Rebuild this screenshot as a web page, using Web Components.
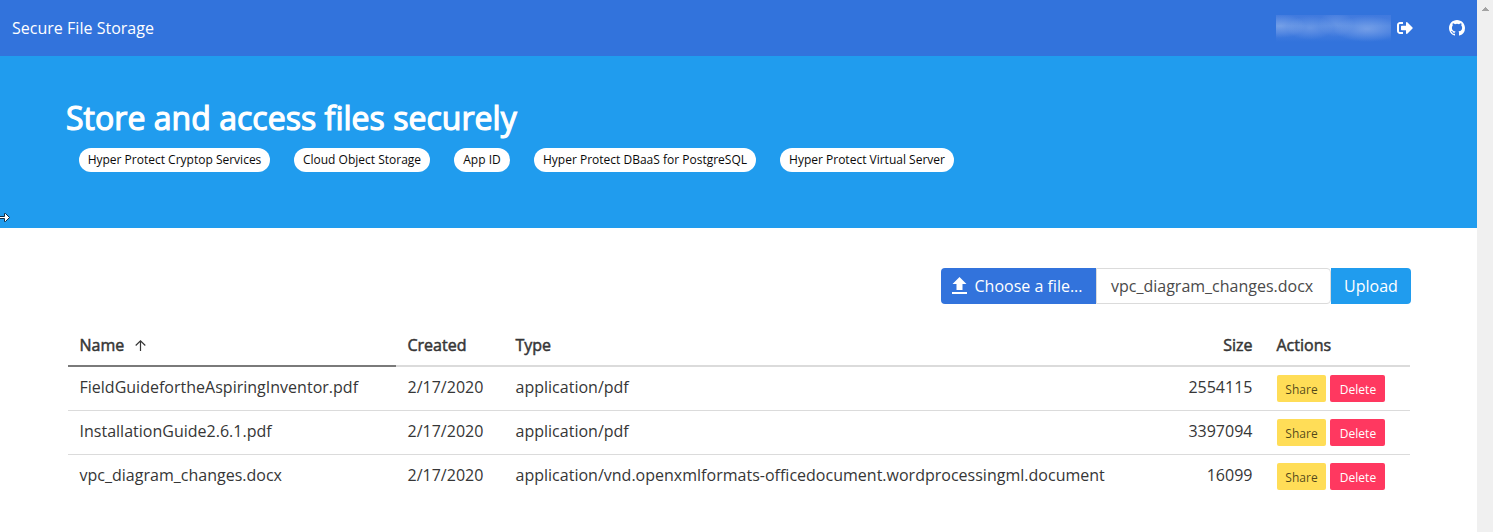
<!DOCTYPE html>
<html lang="en">
<head>
<meta charset="utf-8">
<title>Secure File Storage</title>
<style>
html,body{margin:0;height:100%;overflow:hidden;background:#fff}
body{font-family:"Open Sans","Noto Sans",sans-serif;font-size:16px;line-height:24px;color:#363636}
</style>
</head>
<body>
<storage-app></storage-app>
<script>
function define(name, html, setup) {
  customElements.define(name, class extends HTMLElement {
    constructor() {
      super();
      const t = document.createElement('template');
      t.innerHTML = html;
      this.attachShadow({mode: 'open'}).append(t.content.cloneNode(true));
    }
    connectedCallback() { if (setup) setup(this, this.shadowRoot); }
  });
}

define('top-bar', `
<style>
:host{display:flex;align-items:center;height:56px;background:#3273dc;color:#fff;padding:0 12px;box-sizing:border-box}
.brand{flex:1;letter-spacing:.02px}
.user{width:115px;height:27px;margin-right:6px;background:
radial-gradient(ellipse 26px 12px at 4px 11px,rgba(255,255,255,.24),transparent),
radial-gradient(ellipse 24px 12px at 34px 13px,rgba(255,255,255,.17),transparent),
radial-gradient(ellipse 18px 13px at 60px 9px,rgba(255,255,255,.15),transparent),
radial-gradient(ellipse 34px 13px at 91px 14px,rgba(255,255,255,.24),transparent),
linear-gradient(#4079de,#4a82e0 40%,#437cdf 65%,#3273dc)}
svg{display:block;fill:#fff}
.out{width:16px;height:16px;margin-right:36px}
.git{width:16px;height:16px}
</style>
<span class="brand">Secure File Storage</span>
<span class="user"></span>
<svg class="out" viewBox="0 0 512 512"><path d="M497 273L329 441c-15 15-41 4.500-41-17v-96H152c-13.300 0-24-10.700-24-24v-96c0-13.300 10.700-24 24-24h136V88c0-21.400 25.900-32 41-17l168 168c9.300 9.400 9.300 24.600 0 34zM192 436v-40c0-6.600-5.400-12-12-12H96c-17.700 0-32-14.300-32-32V160c0-17.700 14.300-32 32-32h84c6.600 0 12-5.400 12-12V76c0-6.600-5.400-12-12-12H96c-53 0-96 43-96 96v192c0 53 43 96 96 96h84c6.600 0 12-5.400 12-12z"/></svg>
<svg class="git" viewBox="0 0 16 16"><path d="M8 0C3.580 0 0 3.580 0 8c0 3.540 2.290 6.530 5.470 7.590.4.070.55-.17.55-.38 0-.19-.01-.82-.01-1.490-2.010.37-2.530-.49-2.690-.94-.09-.23-.48-.94-.82-1.130-.28-.15-.68-.52-.01-.53.63-.01 1.080.58 1.230.82.72 1.210 1.870.87 2.330.66.07-.52.28-.87.51-1.070-1.780-.2-3.640-.89-3.640-3.950 0-.87.31-1.590.82-2.150-.08-.2-.36-1.020.08-2.120 0 0 .67-.21 2.200.82a7.420 7.420 0 0 1 4 0c1.530-1.040 2.200-.82 2.200-.82.44 1.100.16 1.920.08 2.120.51.56.82 1.270.82 2.150 0 3.070-1.870 3.750-3.650 3.950.29.25.54.73.54 1.480 0 1.070-.01 1.930-.01 2.200 0 .21.15.46.55.38A8.010 8.010 0 0 0 16 8c0-4.420-3.580-8-8-8z"/></svg>`);

define('service-tag', `
<style>:host{display:flex;align-items:center;height:24px;border-radius:12px;background:#fff;color:#0a0a0a;font-size:12px;padding:0 9px;box-sizing:border-box;justify-content:center;white-space:nowrap}</style><slot></slot>`);

define('hero-banner', `
<style>
:host{display:block;height:172px;background:#209cee;box-sizing:border-box;padding:42px 66px 0;position:relative}
h1{margin:0;font-size:32px;line-height:40px;font-weight:400;color:#fff;-webkit-text-stroke:1.200px #fff;height:50px;letter-spacing:.03px}
.tags{display:flex;gap:24px;padding-left:13px}
.cursor{position:absolute;left:0;top:156px}
</style>
<h1><slot name="title"></slot></h1>
<div class="tags"><slot></slot></div>
<svg class="cursor" width="10" height="11" viewBox="0 0 10 11"><path d="M-1 4.500H4.500V1.500H5.500L9.500 5.500 5.500 9.500H4.500V6.500H-1z" fill="#fff" stroke="#0c2a44" stroke-width="1"/></svg>`);

define('file-picker', `
<style>
:host{display:flex;height:36px;justify-content:flex-end;line-height:36px}
.choose{width:155px;box-sizing:border-box;background:#3273dc;color:#fff;border-radius:4px 0 0 4px;display:flex;align-items:center;padding-left:11px;white-space:nowrap}
.choose svg{width:15px;height:17px;margin:-1px 7.500px 0 0}
.name{width:235px;box-sizing:border-box;border:1px solid #dbdbdb;border-radius:0 4px 4px 0;padding-left:14px;line-height:34px;color:#4a4a4a;white-space:nowrap}
.go{width:80px;background:#209cee;color:#fff;border-radius:0 4px 4px 0;text-align:center}
</style>
<span class="choose"><svg viewBox="0 0 15 17" fill="#fff"><path d="M7.500 0L14.500 7H10.500V13H4.500V7H.500zM0 15H15V17H0z"/></svg><span>Choose a file...</span></span>
<span class="name"><slot></slot></span>
<span class="go">Upload</span>`);

define('action-button', `
<style>
:host{display:block;box-sizing:border-box;height:27px;line-height:29px;font-size:12px;border-radius:2px;text-align:center;width:49px;background:#ffdd57;color:rgba(0,0,0,.7)}
:host([danger]){width:55px;padding-left:1px;background:#ff3860;color:#fff}
</style><slot></slot>`);

define('file-row', `
<style>
:host{display:grid;grid-template-columns:328px 108px 626px 134px 146px;height:44px;box-sizing:border-box;border-bottom:1px solid #dbdbdb}
:host(:last-of-type){border-bottom:0}
span{padding:8px 11.500px 0;white-space:nowrap;letter-spacing:.01px}
.size{text-align:right}
.acts{display:flex;gap:4px;padding-left:13px}
</style>
<span class="name"></span><span class="created"></span><span class="type"></span><span class="size"></span>
<span class="acts"><action-button>Share</action-button><action-button danger>Delete</action-button></span>`,
(el, root) => {
  for (const k of ['name', 'created', 'type', 'size']) root.querySelector('.' + k).textContent = el.getAttribute(k);
});

define('file-table', `
<style>
:host{display:block}
.head{display:grid;grid-template-columns:328px 108px 626px 134px 146px;height:42px;-webkit-text-stroke:.5px #363636}
.head span{padding:8px 11.500px 0;border-bottom:2px solid #dbdbdb}
.head .sorted{border-color:#7a7a7a;display:flex}
.head .size{text-align:right}
.head span:last-child{padding-left:12.500px}
svg{margin:7px 0 0 10.500px;width:11px;height:11px}
</style>
<div class="head"><span class="sorted">Name<svg viewBox="0 0 11 11" fill="none" stroke="#363636" stroke-width="1.200"><path d="M5.500 11V1M.700 5.500L5.500.900 10.300 5.500"/></svg></span><span>Created</span><span>Type</span><span class="size">Size</span><span>Actions</span></div>
<slot></slot>`);

define('page-scrollbar', `
<style>:host{display:block;width:16px;background:#f0f0f0}svg{display:block;margin:7px 0 0 5px}</style>
<svg width="7" height="4" viewBox="0 0 7 4"><path d="M3 0h1v1h1v1h1v1h1v1H0V3h1V2h1V1h1z" fill="#a3a3a3"/></svg>`);

define('storage-app', `
<style>
:host{display:grid;grid-template-columns:1fr 16px;height:532px}
main{padding:40px 66px 0 68px}
file-picker{margin-bottom:21px}
file-table{width:1342px}
</style>
<div>
<top-bar></top-bar>
<hero-banner><span slot="title">Store and access files securely</span>
<service-tag style="width:191px">Hyper Protect Cryptop Services</service-tag><service-tag style="width:136px">Cloud Object Storage</service-tag><service-tag style="width:56px">App ID</service-tag><service-tag style="width:222px">Hyper Protect DBaaS for PostgreSQL</service-tag><service-tag style="width:174px">Hyper Protect Virtual Server</service-tag>
</hero-banner>
<main>
<file-picker>vpc_diagram_changes.docx</file-picker>
<file-table>
<file-row name="FieldGuidefortheAspiringInventor.pdf" created="2/17/2020" type="application/pdf" size="2554115"></file-row>
<file-row name="InstallationGuide2.6.1.pdf" created="2/17/2020" type="application/pdf" size="3397094"></file-row>
<file-row name="vpc_diagram_changes.docx" created="2/17/2020" type="application/vnd.openxmlformats-officedocument.wordprocessingml.document" size="16099"></file-row>
</file-table>
</main>
</div>
<page-scrollbar></page-scrollbar>`);
</script>
</body>
</html>
